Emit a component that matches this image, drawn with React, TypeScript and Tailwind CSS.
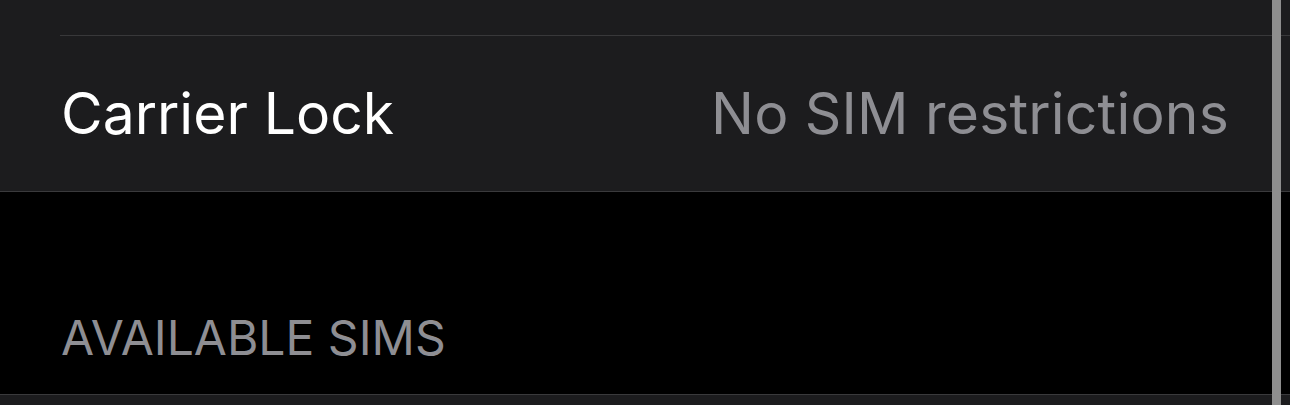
import React from "react";

export default function App() {
  return (
    <div className="relative w-[1290px] h-[405px] overflow-hidden bg-black font-['Inter','Noto_Sans',sans-serif]">
      {/* previous row tail */}
      <div className="h-[35px] bg-[#1c1c1e]" />
      <div className="flex bg-[#1c1c1e]">
        <div className="w-[60px]" />
        <div className="flex-1 h-px bg-[#38383a]" />
      </div>
      {/* Carrier Lock row */}
      <div className="h-[155px] bg-[#1c1c1e] flex items-center justify-between pl-[61px] pr-[61px]">
        <span className="text-white text-[57px] tracking-[0px] leading-none">Carrier Lock</span>
        <span className="text-[#8e8e93] text-[57px] tracking-[0.2px] leading-none">No SIM restrictions</span>
      </div>
      <div className="h-px bg-[#3a3a3c]" />
      {/* section header */}
      <div className="h-[202px] flex items-end pl-[61px] pb-[32px]">
        <span className="text-[#8e8e93] text-[48px] leading-none tracking-[0px]">AVAILABLE SIMS</span>
      </div>
      <div className="h-px bg-[#3a3a3c]" />
      <div className="h-[20px] bg-[#1c1c1e]" />
      {/* scroll indicator */}
      <div className="absolute top-0 left-[1272px] w-[9px] h-full bg-[#8e8e8e]" />
    </div>
  );
}
